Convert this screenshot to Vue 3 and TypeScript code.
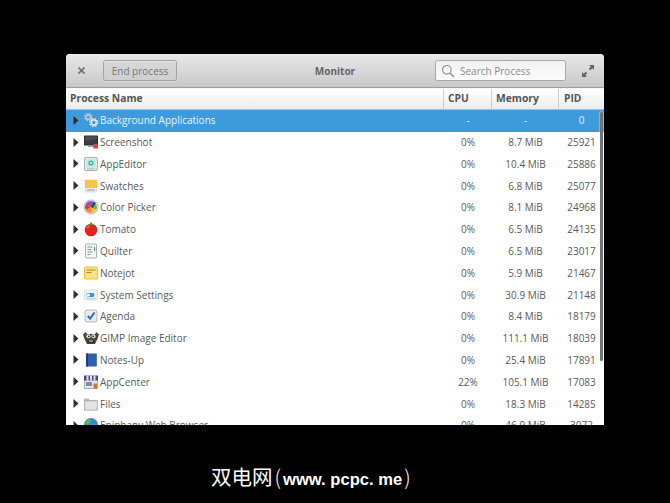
<template>
  <div class="screen">
    <div class="window">
      <header class="titlebar">
        <button class="close" aria-label="Close">
          <svg width="9" height="9" viewBox="0 0 9 9"><path d="M1.5 1.5l6 6M7.5 1.5l-6 6" stroke="#6a6a6a" stroke-width="1.7" /></svg>
        </button>
        <button class="end-btn">End process</button>
        <div class="title">Monitor</div>
        <div class="search">
          <svg width="14" height="14" viewBox="0 0 14 14" fill="none" stroke="#8f8f8f"><circle cx="5.8" cy="5.8" r="4.3" stroke-width="1.1" /><path d="M9 9l4 4" stroke-width="1.5" /></svg>
          <span>Search Process</span>
        </div>
        <svg class="expand" width="12" height="12" viewBox="0 0 12 12" fill="#666">
          <path d="M7 0h5v5l-1.7-1.7-2 2-1.6-1.6 2-2zM5 12H0V7l1.7 1.7 2-2 1.6 1.6-2 2z" />
        </svg>
      </header>
      <div class="thead">
        <div class="th">Process Name</div>
        <div class="th">CPU</div>
        <div class="th">Memory</div>
        <div class="th">PID</div>
      </div>
      <div class="rows">
        <div v-for="(p, i) in processes" :key="p.pid" class="row" :class="{ selected: i === 0 }">
          <div class="name">
            <svg class="arrow" width="6" height="9" viewBox="0 0 6 9"><path d="M0.5 0l5 4.5-5 4.5z" /></svg>
            <svg class="icon" width="16" height="16" viewBox="0 0 16 16" v-html="icons[p.icon]"></svg>
            <span>{{ p.name }}</span>
          </div>
          <div class="cell">{{ p.cpu }}</div>
          <div class="cell">{{ p.mem }}</div>
          <div class="cell">{{ p.pid }}</div>
        </div>
        <div class="scrollbar"></div>
      </div>
    </div>
    <div class="watermark">双电网<span class="paren">(</span><span class="url">www. pcpc. me</span><span class="paren">)</span></div>
  </div>
</template>

<script setup lang="ts">
interface Proc {
  name: string;
  icon: string;
  cpu: string;
  mem: string;
  pid: string;
}

const processes: Proc[] = [
  { name: "Background Applications", icon: "gears", cpu: "-", mem: "-", pid: "0" },
  { name: "Screenshot", icon: "screenshot", cpu: "0%", mem: "8.7 MiB", pid: "25921" },
  { name: "AppEditor", icon: "appeditor", cpu: "0%", mem: "10.4 MiB", pid: "25886" },
  { name: "Swatches", icon: "swatches", cpu: "0%", mem: "6.8 MiB", pid: "25077" },
  { name: "Color Picker", icon: "picker", cpu: "0%", mem: "8.1 MiB", pid: "24968" },
  { name: "Tomato", icon: "tomato", cpu: "0%", mem: "6.5 MiB", pid: "24135" },
  { name: "Quilter", icon: "quilter", cpu: "0%", mem: "6.5 MiB", pid: "23017" },
  { name: "Notejot", icon: "notejot", cpu: "0%", mem: "5.9 MiB", pid: "21467" },
  { name: "System Settings", icon: "settings", cpu: "0%", mem: "30.9 MiB", pid: "21148" },
  { name: "Agenda", icon: "agenda", cpu: "0%", mem: "8.4 MiB", pid: "18179" },
  { name: "GIMP Image Editor", icon: "gimp", cpu: "0%", mem: "111.1 MiB", pid: "18039" },
  { name: "Notes-Up", icon: "notes", cpu: "0%", mem: "25.4 MiB", pid: "17891" },
  { name: "AppCenter", icon: "appcenter", cpu: "22%", mem: "105.1 MiB", pid: "17083" },
  { name: "Files", icon: "files", cpu: "0%", mem: "18.3 MiB", pid: "14285" },
  { name: "Epiphany Web Browser", icon: "web", cpu: "0%", mem: "46.9 MiB", pid: "3072" },
];

const icons: Record<string, string> = {
  gears: `<circle cx="5.200" cy="5" r="2.300" fill="none" stroke="#c3ccd4" stroke-width="1.500"/><circle cx="5.200" cy="5" r="3.500" fill="none" stroke="#c3ccd4" stroke-width="1.200" stroke-dasharray="1.500 1.250"/><circle cx="10.800" cy="10.500" r="2.600" fill="none" stroke="#dfe4e8" stroke-width="1.700"/><circle cx="10.800" cy="10.500" r="4" fill="none" stroke="#dfe4e8" stroke-width="1.300" stroke-dasharray="1.700 1.440"/>`,
  screenshot: `<rect x="1" y="1.500" width="14" height="10" rx=".8" fill="#2b2d31"/><rect x="2" y="2.500" width="12" height="8" fill="#3c3f46"/><path d="M2 2.500h12v2L2 7z" fill="#4d5058"/><rect x="5" y="11.500" width="6" height="1.500" fill="#9a9a9a"/><rect x="10.500" y="10" width="4.500" height="4.500" fill="#d8403a"/>`,
  appeditor: `<rect x="1.500" y="1.500" width="13" height="13" rx="1.500" fill="#e4e8e8" stroke="#a9b0b2"/><rect x="3.500" y="3.500" width="9" height="8" fill="#bfe8de"/><circle cx="8" cy="7" r="2.600" fill="#3fb8a0"/><circle cx="8" cy="7" r="1" fill="#eafaf6"/><rect x="4" y="12.300" width="8" height="1" fill="#b8bdbf"/>`,
  swatches: `<rect x="2" y="2" width="12" height="12" rx="1" fill="#eeeeee" stroke="#c8c8c8" stroke-width=".6"/><rect x="2" y="2" width="12" height="8" rx="1" fill="#f7c34f"/><rect x="4" y="11.500" width="8" height="1" fill="#9a9a9a"/>`,
  picker: `<circle cx="8" cy="8" r="7" fill="#f2f2f2" stroke="#8a8a8a" stroke-width=".6"/><path d="M8 8V2a6 6 0 0 1 5.200 3z" fill="#3f7fd9"/><path d="M8 8l5.200-3A6 6 0 0 1 13.200 11z" fill="#6bb64a"/><path d="M8 8l5.200 3A6 6 0 0 1 8 14z" fill="#f2c230"/><path d="M8 8v6a6 6 0 0 1-5.200-3z" fill="#f08a26"/><path d="M8 8l-5.200 3A6 6 0 0 1 2.800 5z" fill="#d93a34"/><path d="M8 8L2.800 5A6 6 0 0 1 8 2z" fill="#9a4bb8"/><path d="M8 8l3-5 1.500 1-3 5z" fill="#333"/>`,
  tomato: `<circle cx="8" cy="9" r="6.300" fill="#e2231f"/><path d="M3.500 6.500A5 5 0 0 1 7 4L5 8z" fill="#f56a5c"/><path d="M8 4.500L5 3.200l2-.4.6-1.600h1l.5 1.600 2-.1-2.600 1.600z" fill="#4c9a2a"/>`,
  quilter: `<rect x="2.500" y="1" width="11" height="14" rx=".8" fill="#f5f6f7" stroke="#a8acb0"/><path d="M4.500 4h5M4.500 6.500h4M4.500 9h5M4.500 11.500h3" stroke="#8a8f96"/><rect x="11" y="4" width="1" height="4" fill="#3d8fdc"/>`,
  notejot: `<rect x="1.500" y="2" width="13" height="12" rx="1" fill="#fbe27c" stroke="#e6c23f"/><path d="M3.500 5h9M3.500 7.500h5" stroke="#9b8a45"/>`,
  settings: `<rect x="1.500" y="3" width="13" height="10" rx="1.200" fill="#eef1f3" stroke="#cfd5d9" stroke-width=".7"/><rect x="3.500" y="6" width="8" height="4" rx="2" fill="#3d8fdc"/><circle cx="5.500" cy="8" r="1.600" fill="#f5f5f5"/><rect x="3" y="11" width="10" height=".8" fill="#c5cbd0"/>`,
  agenda: `<rect x="2" y="2" width="12" height="12" rx="2" fill="#e9ebee" stroke="#b5bac0"/><path d="M4.800 8l2.300 2.600L11.500 4.500" fill="none" stroke="#2f6fc4" stroke-width="2"/>`,
  gimp: `<path d="M0 4.500l2.500-2.500 1.500 2h8l1.500-2L16 4.500 14.500 9l-2.500 5H4L1.500 9z" fill="#4d483d"/><circle cx="5.500" cy="6.200" r="2" fill="#eee"/><circle cx="10.500" cy="6.200" r="2" fill="#eee"/><circle cx="5.800" cy="6.300" r=".9" fill="#222"/><circle cx="10.200" cy="6.300" r=".9" fill="#222"/><path d="M4 10.500h8l-1 2.500H5z" fill="#2c2a25"/><path d="M6 10.500h4v1.200H6z" fill="#c8c2b2"/>`,
  notes: `<rect x="3" y="1.500" width="11" height="13" rx=".8" fill="#2f5fae"/><rect x="3" y="1.500" width="2" height="13" fill="#1f3f7a"/><rect x="13" y="2" width="1" height="12" fill="#4a7cc9"/>`,
  appcenter: `<rect x="1.500" y="6" width="13" height="8.500" fill="#e6e6ea" stroke="#8b8b93" stroke-width=".7"/><path d="M1 1.500h14v4.500a1.700 1.700 0 0 1-2.300 0 1.700 1.700 0 0 1-2.300 0 1.700 1.700 0 0 1-2.400 0 1.700 1.700 0 0 1-2.300 0 1.700 1.700 0 0 1-2.300 0 1.700 1.700 0 0 1-2.400 0z" fill="#4a4a78"/><path d="M3.500 1.500h2v5h-2zM7 1.500h2v5H7zM10.500 1.500h2v5h-2z" fill="#d9dcea"/><rect x="3" y="8" width="6" height="4" fill="#7d88b4"/><rect x="10.500" y="9.500" width="3.500" height="5" fill="#d9732b"/>`,
  files: `<path d="M1 3.500a1 1 0 0 1 1-1h3.500l1 1.500H14a1 1 0 0 1 1 1v8.500a1 1 0 0 1-1 1H2a1 1 0 0 1-1-1z" fill="#b9b9b9"/><rect x="1.500" y="5" width="13" height="9" fill="#e4e4e4" stroke="#a5a5a5" stroke-width=".6"/>`,
  web: `<circle cx="8" cy="8" r="7" fill="#3f86d4"/><path d="M3 4l4-2 1 3-3 2 1 3-2 1zM10 7l4 1-2 5-2-2z" fill="#6fb64a"/>`,
};
</script>

<style scoped>
.screen {
  width: 670px;
  height: 503px;
  background: #000;
  padding-top: 54px;
  box-sizing: border-box;
  display: flex;
  flex-direction: column;
  align-items: center;
  overflow: hidden;
  font-family: "Open Sans", sans-serif;
}
.window {
  width: 538px;
  height: 371px;
  flex: 0 0 auto;
  overflow: hidden;
  background: #fff;
  border-radius: 4px 4px 0 0;
  font-size: 10px;
}
.titlebar {
  height: 33px;
  display: flex;
  align-items: center;
  position: relative;
  padding: 0 0 0 11px;
  background: linear-gradient(#e8e8e8, #c8c8c8);
  border-bottom: 1px solid #9e9e9e;
}
.close {
  width: 9px;
  height: 9px;
  padding: 0;
  border: 0;
  background: none;
  display: flex;
}
.end-btn {
  margin-left: 17px;
  margin-right: auto;
  width: 74px;
  height: 21px;
  padding: 0;
  border: 1px solid #a3a3a3;
  border-radius: 2.5px;
  background: linear-gradient(#d8d8d8, #cfcfcf);
  color: #767676;
  font: inherit;
  box-shadow: inset 0 1px 0 rgba(255, 255, 255, 0.35), 0 1px 0 rgba(255, 255, 255, 0.25);
}
.title {
  position: absolute;
  left: 0;
  right: 0;
  text-align: center;
  font-weight: 700;
  color: #666;
  pointer-events: none;
}
.search {
  width: 131px;
  height: 21px;
  box-sizing: border-box;
  display: flex;
  align-items: center;
  gap: 5px;
  padding-left: 5px;
  border: 1px solid #a9a9a9;
  border-radius: 2.5px;
  background: linear-gradient(#f2f2f2, #fbfbfb);
  color: #8b8b8b;
}
.expand {
  margin: 0 10px 0 16px;
}
.thead,
.row {
  display: grid;
  grid-template-columns: 378px 48px 67px 45px;
}
.thead {
  height: 20px;
  background: linear-gradient(#ffffff, #ececec);
  border-bottom: 1px solid #bcbcbc;
  border-top: 1px solid #f6f6f6;
  font-size: 10.3px;
}
.th {
  display: flex;
  align-items: center;
  padding: 0 0 2px 4px;
  font-weight: 700;
  color: #555;
  border-right: 1px solid #cdcdcd;
}
.th:last-child {
  border-right: 0;
  padding-left: 5px;
}
.rows {
  position: relative;
}
.row {
  height: 21.8px;
  box-sizing: border-box;
  padding-bottom: 1.4px;
  align-items: center;
  color: #5a5a5a;
}
.row.selected {
  background: #3d9bdc;
  color: #eaf4fb;
}
.name {
  display: flex;
  align-items: center;
  padding-left: 7px;
}
.arrow {
  fill: #2f2f2f;
  flex: 0 0 auto;
}
.icon {
  margin-left: 4px;
  margin-right: 1px;
  flex: 0 0 auto;
}
.cell {
  text-align: center;
}
.scrollbar {
  position: absolute;
  left: 534px;
  top: 2px;
  width: 3px;
  height: 249px;
  border-radius: 2px;
  background: #6f7276;
  box-shadow: 0 0 0 1px rgba(255, 255, 255, 0.3);
}
.watermark {
  align-self: flex-start;
  margin: 38px 0 0 211px;
  color: #fff;
  font-family: "Noto Sans CJK SC", sans-serif;
  font-size: 20.500px;
  line-height: 26px;
  white-space: nowrap;
}
.paren {
  display: inline-block;
  margin: 0 2px;
  font-weight: 300;
}
.url {
  font-family: "Liberation Sans", sans-serif;
  font-size: 16.6px;
  font-weight: 700;
}
</style>

<style>
body {
  margin: 0;
  background: #000;
}
</style>
